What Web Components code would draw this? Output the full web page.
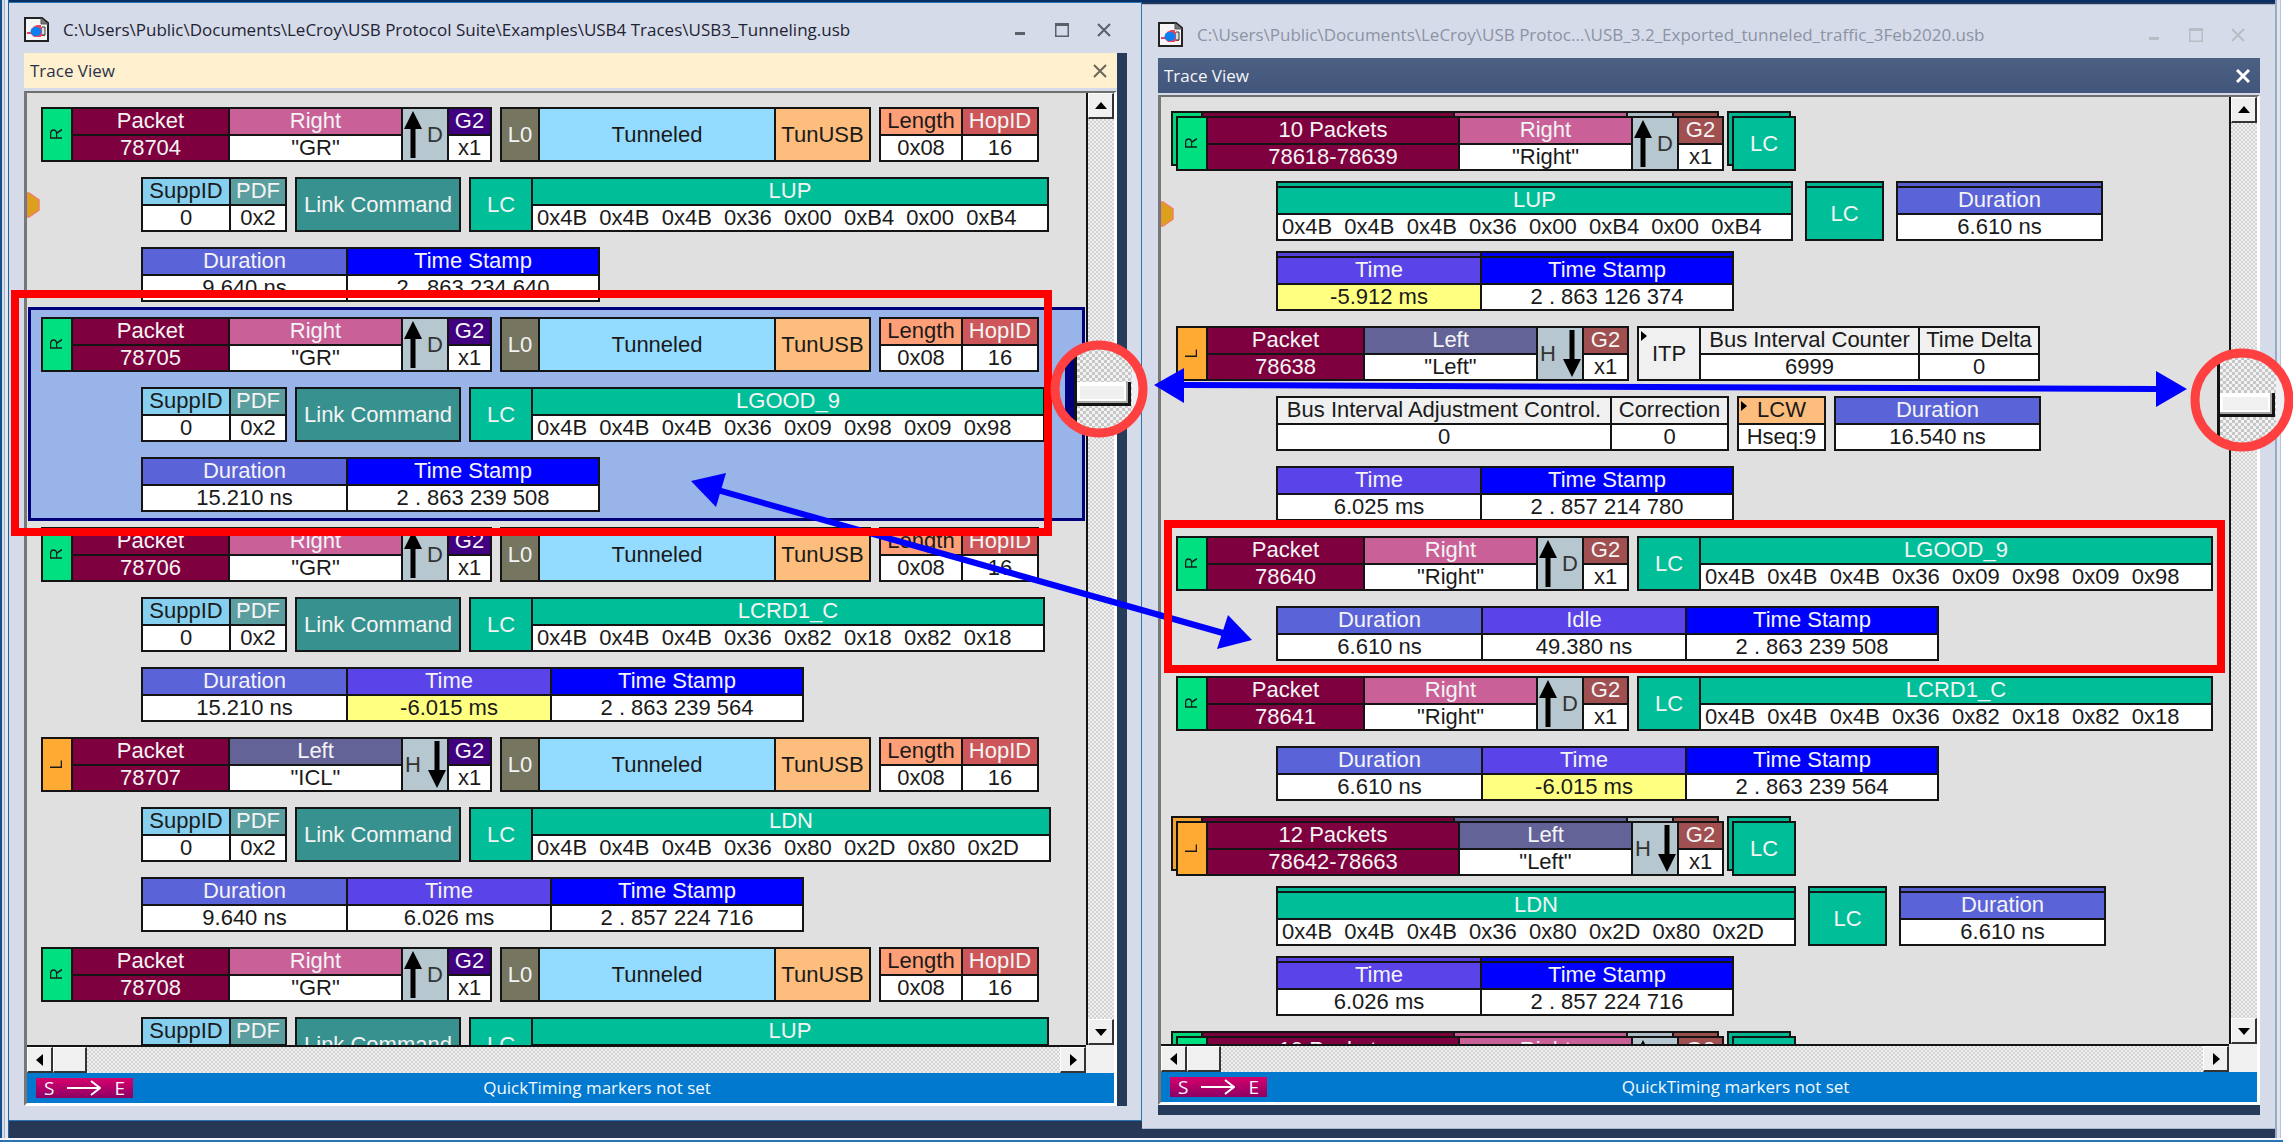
<!DOCTYPE html>
<html lang="en">
<head>
<meta charset="utf-8">
<title>USB Protocol Suite</title>
<style>
  html, body { height: 100%; margin: 0; }
  body { background: #fff; overflow: hidden; }
</style>
</head>
<body>
<app-frame>
  <mdi-window class="active" path="C:\Users\Public\Documents\LeCroy\USB Protocol Suite\Examples\USB4 Traces\USB3_Tunneling.usb">
    <trace-view trace="tunneling"></trace-view>
  </mdi-window>
  <mdi-window class="inactive" path="C:\Users\Public\Documents\LeCroy\USB Protoc...\USB_3.2_Exported_tunneled_traffic_3Feb2020.usb">
    <trace-view trace="exported"></trace-view>
  </mdi-window>
  <callout-layer slot="overlay"></callout-layer>
</app-frame>

<script>
const COLORS = {
  R: '#00e080', L: '#ffaa33', packet: '#7f003e', right: '#c96198', left: '#636398',
  g2: '#40007f', g2b: '#a05050', l0: '#757560', tunneled: '#93dbff', tan: '#fdbd7c',
  length: '#ff9f77', hop: '#cc5659', supp: '#87cfee', pdf: '#5b9e9f', link: '#37918f',
  lc: '#00bf98', dur: '#5a63d8', time: '#5a43e8', stamp: '#0000ff', plain: '#f0f0f0', arrow: '#b7c7cf'
};
const LIGHT = ['plain', 'tan', 'tunneled', 'length', 'supp'];

/* cell: label, value, width, colour key, kind */
const two = (label, value, w, c, extra = '') => ({ label, value, w, c, extra });
const one = (label, w, c, extra = '') => ({ label, w, c, extra });
const side = s => ({ label: s, w: 30, c: s, extra: 'side' });
const dir = s => ({ dir: s, w: 46, c: 'arrow' });
const isRight = s => s === 'R';

const G = {
  head: (s, name, num, nick, pw, g2w, g2c) => [side(s), two(name, num, pw, 'packet', 'full'),
    two(isRight(s) ? 'Right' : 'Left', nick && '"' + nick + '"', 173, isRight(s) ? 'right' : 'left'), dir(s), two('G2', nick && 'x1', g2w, g2c)],
  tunnel: () => [one('L0', 38, 'l0'), one('Tunneled', 236, 'tunneled'), one('TunUSB', 95, 'tan')],
  hop: () => [two('Length', '0x08', 82, 'length'), two('HopID', '16', 76, 'hop')],
  supp: () => [two('SuppID', '0', 88, 'supp'), two('PDF', '0x2', 56, 'pdf')],
  link: () => [one('Link Command', 164, 'link')],
  lc: (n, d, w) => [one('LC', 62, 'lc'), two(n, d, w, 'lc', 'data')],
  dur: v => two('Duration', v, 205, 'dur'),
  time: v => two('Time', v, 204, 'time', v.startsWith('-') ? 'warn' : ''),
  stamp: v => two('Time Stamp', v, 252, 'stamp')
};
const bytes = s => s.split(' ').map(b => '0x' + b).join('  ');
const usb4 = (s, num, nick, name, data, w, times, selected) => ({ selected, rows: [
  [G.head(s, 'Packet', num, nick, 157, 43, 'g2'), G.tunnel(), G.hop()],
  [G.supp(), G.link(), G.lc(name, bytes(data), w)],
  [times]
]});
const LUP = '4B 4B 4B 36 00 B4 00 B4', LG9 = '4B 4B 4B 36 09 98 09 98',
      LCR = '4B 4B 4B 36 82 18 82 18', LDN = '4B 4B 4B 36 80 2D 80 2D';
const stack = (s, count, range, name, data, w, times) => ({ stacked: true, rows: [
  [G.head(s, count + ' Packets', range, range && (isRight(s) ? 'Right' : 'Left'), 252, 45, 'g2b'), [one('LC', 62, 'lc')]],
  [[two(name, bytes(data), w, 'lc', 'data')], [one('LC', 77, 'lc')], [G.dur('6.610 ns')]],
  [times]
]});
const usb3 = (s, num, groups, ...rows) => ({ rows: [
  [G.head(s, 'Packet', num, isRight(s) ? 'Right' : 'Left', 157, 45, 'g2b'), ...groups], ...rows
]});

const TRACES = {
  tunneling: [
    usb4('R', '78704', 'GR', 'LUP', LUP, 516, [G.dur('9.640 ns'), G.stamp('2 . 863 234 640')]),
    usb4('R', '78705', 'GR', 'LGOOD_9', LG9, 512, [G.dur('15.210 ns'), G.stamp('2 . 863 239 508')], true),
    usb4('R', '78706', 'GR', 'LCRD1_C', LCR, 512, [G.dur('15.210 ns'), G.time('-6.015 ms'), G.stamp('2 . 863 239 564')]),
    usb4('L', '78707', 'ICL', 'LDN', LDN, 518, [G.dur('9.640 ns'), G.time('6.026 ms'), G.stamp('2 . 857 224 716')]),
    { rows: usb4('R', '78708', 'GR', 'LUP', LUP, 516, []).rows.slice(0, 2) }
  ],
  exported: [
    stack('R', 10, '78618-78639', 'LUP', LUP, 515, [G.time('-5.912 ms'), G.stamp('2 . 863 126 374')]),
    usb3('L', '78638',
      [[one('ITP', 62, 'plain', 'flag'), two('Bus Interval Counter', '6999', 219, 'plain'), two('Time Delta', '0', 120, 'plain')]],
      [[two('Bus Interval Adjustment Control.', '0', 334, 'plain'), two('Correction', '0', 117, 'plain')],
       [two('LCW', 'Hseq:9', 87, 'tan', 'flag')], [G.dur('16.540 ns')]],
      [[G.time('6.025 ms'), G.stamp('2 . 857 214 780')]]),
    usb3('R', '78640', [G.lc('LGOOD_9', bytes(LG9), 512)],
      [[G.dur('6.610 ns'), two('Idle', '49.380 ns', 204, 'time'), G.stamp('2 . 863 239 508')]]),
    usb3('R', '78641', [G.lc('LCRD1_C', bytes(LCR), 512)],
      [[G.dur('6.610 ns'), G.time('-6.015 ms'), G.stamp('2 . 863 239 564')]]),
    stack('L', 12, '78642-78663', 'LDN', LDN, 518, [G.time('6.026 ms'), G.stamp('2 . 857 224 716')]),
    { stacked: true, rows: stack('R', 10, '', '', '', 0, []).rows.slice(0, 1) }
  ]
};

class BaseElement extends HTMLElement {
  connectedCallback() {
    if (!this.shadowRoot) {
      this.attachShadow({ mode: 'open' }).innerHTML = this.render();
      this.ready();
    }
  }
  ready() {}
}

customElements.define('field-cell', class extends BaseElement {
  render() {
    const d = this.data;
    this.style.width = d.w + 'px';
    this.style.setProperty('--c', COLORS[d.c]);
    this.style.setProperty('--ink', LIGHT.includes(d.c) || 'RL'.includes(d.c) ? '#1a1a1a' : '#f4f4f4');
    const css = `<style>
      :host { display: flex; flex-direction: column; flex: none; box-sizing: border-box; position: relative;
        border-right: 2px solid #141414; background: var(--c); color: var(--ink);
        font: 22px/24px "Liberation Sans", Arial, sans-serif; text-align: center; white-space: pre; }
      .label { border-bottom: 2px solid #141414; height: 25px; }
      .value { background: #fff; color: #1a1a1a; height: 24px; }
      .value.full { background: var(--c); color: #f4f4f4; }
      .value.warn { background: #ffff80; }
      .value.data { text-align: left; padding-left: 4px; }
      .only { margin: auto; }
      .side { font-size: 17px; line-height: 20px; writing-mode: vertical-rl; transform: rotate(180deg); margin: auto; }
      .dir { display: flex; flex: 1; align-items: center; justify-content: space-between; padding: 0 4px 0 1px; color: #333; }
      .dir.down { flex-direction: row-reverse; padding: 0 1px 0 2px; }
      .corner-mark { position: absolute; left: 2px; top: 3px; width: 6px; height: 10px; }
      svg { display: block; }
    </style>`;
    if (this.hasAttribute('blank')) return css;
    if (d.dir) {
      const up = isRight(d.dir);
      return css + `<div class="dir ${up ? '' : 'down'}"><svg width="18" height="51" viewBox="0 0 18 51" aria-hidden="true"><path d="${up
        ? 'M9 2L18 20H11.5V49H6.5V20H0Z' : 'M9 49L18 31H11.5V2H6.5V31H0Z'}" fill="#000"/></svg><span>${up ? 'D' : 'H'}</span></div>`;
    }
    const mark = d.extra === 'flag' ? '<svg class="corner-mark" viewBox="0 0 6 10" aria-hidden="true"><path d="M0 0L6 5L0 10Z"/></svg>' : '';
    if (d.extra === 'side') return css + `<span class="side">${d.label}</span>`;
    if (d.value === undefined) return css + mark + `<span class="only">${d.label}</span>`;
    return css + mark + `<div class="label">${d.label}</div><div class="value ${d.extra}">${d.value}</div>`;
  }
});

customElements.define('field-group', class extends BaseElement {
  render() {
    return `<style>
      :host { display: block; flex: none; position: relative; }
      .cells { display: flex; box-sizing: border-box; height: 55px; border: 2px solid #141414; border-right: 0; position: relative; }
      .back { position: absolute; top: -5px; left: 0; filter: brightness(.95); }
      :host([fan]) .back { left: -5px; }
    </style>${this.hasAttribute('stacked') ? '<div class="cells back" aria-hidden="true"></div>' : ''}<div class="cells front"></div>`;
  }
  ready() {
    for (const box of this.shadowRoot.querySelectorAll('.cells'))
      for (const d of this.cells) {
        const c = document.createElement('field-cell');
        c.data = d;
        if (box.classList.contains('back')) c.setAttribute('blank', '');
        box.append(c);
      }
  }
});

customElements.define('trace-packet', class extends BaseElement {
  render() {
    return `<style>
      :host { display: flex; flex-direction: column; gap: 15px; margin: 0 3px; padding: 8px 0 7px var(--inset, 11px); }
      :host([selected]) { background: #99b4e8; outline: 3px solid #00007d; outline-offset: -1px; }
      :host([stacked]) { padding-top: 13px; }
      .row { display: flex; gap: 8px; }
      .row + .row { padding-left: 100px; }
      :host([stacked]) .row + .row { gap: 12px; }
    </style>${this.data.rows.map(() => '<div class="row"></div>').join('')}`;
  }
  ready() {
    const rows = this.shadowRoot.querySelectorAll('.row');
    this.data.rows.forEach((groups, i) => groups.forEach(cells => {
      const g = document.createElement('field-group');
      g.cells = cells;
      if (this.data.stacked) { g.setAttribute('stacked', ''); if (i === 0) g.setAttribute('fan', ''); }
      rows[i].append(g);
    }));
  }
});

customElements.define('scroll-strip', class extends BaseElement {
  render() {
    const v = this.getAttribute('axis') === 'y';
    const btn = (name, pts) => `<button type="button" aria-label="${name}"><svg width="12" height="14" viewBox="0 0 12 14"><polygon points="${pts}"/></svg></button>`;
    return `<style>
      :host { display: flex; box-sizing: border-box; min-width: 0; min-height: 0;
        background: repeating-conic-gradient(#d2d2d2 0 25%, #f1f1f1 0 50%) 0 0 / 4px 4px; }
      :host([axis=y]) { flex-direction: column; border-left: 2px solid #141414; }
      :host([axis=x]) { border-top: 2px solid #141414; }
      button, .thumb { box-sizing: border-box; flex: none; width: 26px; height: 26px; padding: 0; margin: 0; display: grid; place-items: center;
        background: #f0f0f0; border: 1px solid #fff; border-right: 2px solid #333; border-bottom: 2px solid #333; border-radius: 0; }
      .thumb { width: 34px; }
      .track { flex: 1; }
      svg { display: block; }
    </style>${v
      ? btn('Scroll up', '0,10 6,3 12,10') + '<div class="track"></div>' + btn('Scroll down', '0,4 12,4 6,11')
      : btn('Scroll left', '9,1 9,13 2,7') + '<div class="thumb"></div><div class="track"></div>' + btn('Scroll right', '3,1 3,13 10,7')}`;
  }
});

customElements.define('trace-view', class extends BaseElement {
  render() {
    return `<style>
      :host { display: flex; flex-direction: column; flex: 1; min-height: 0; min-width: 0; font-family: "Open Sans", "Noto Sans", sans-serif; }
      header { display: flex; flex: none; align-items: center; justify-content: space-between; height: 35px; padding: 0 9px 0 6px;
        font-size: 17px; line-height: 24px; background: var(--head); color: var(--head-ink); }
      header button { border: 0; background: none; padding: 0; width: 16px; height: 16px; display: grid; place-items: center; color: var(--head-x); }
      header path { stroke-width: var(--x-w); }
      .client { flex: 1; min-height: 0; display: grid; grid-template: minmax(0, 1fr) 28px 30px / minmax(0, 1fr) 28px;
        margin-top: var(--head-gap); border: 3px solid #fff; border-left-color: #777; border-top: 2px solid #6e6e6e; }
      .list { overflow: hidden; position: relative; background: #e0e0e0; padding-top: var(--list-top); }
      .marker { position: absolute; left: 0; top: var(--marker-top); }
      .corner { background: #f0f0f0; }
      footer { grid-column: 1 / -1; background: #0079cf; color: #f4f9ff; display: flex; align-items: center; padding-left: 9px;
        font-size: 17px; line-height: 24px; }
      .range { display: flex; align-items: center; justify-content: space-between; box-sizing: border-box; width: 97px; height: 20px;
        padding: 0 8px; background: linear-gradient(#d8006c, #8c0064); font-size: 19px; line-height: 20px; }
      .msg { flex: 1; text-align: center; padding-right: 53px; }
    </style>
    <header><span>Trace View</span><button type="button" aria-label="Close view"><svg width="14" height="14" viewBox="0 0 14 14" fill="none" stroke="currentColor"><path d="M1 1L13 13M13 1L1 13"/></svg></button></header>
    <div class="client">
      <div class="list"><svg class="marker" width="13" height="26" viewBox="0 0 13 26" aria-hidden="true"><path d="M0 1H2L12 8V18L2 25H0Z" fill="#dca01c" stroke="#f08060" stroke-width="1.5"/></svg></div>
      <scroll-strip axis="y"></scroll-strip>
      <scroll-strip axis="x"></scroll-strip>
      <div class="corner"></div>
      <footer><span class="range"><span>S</span><svg width="34" height="16" viewBox="0 0 34 16" fill="none" stroke="#fff" stroke-width="2" aria-hidden="true"><path d="M0 8H32M24 1L33 8L24 15"/></svg><span>E</span></span><span class="msg">QuickTiming markers not set</span></footer>
    </div>`;
  }
  ready() {
    const list = this.shadowRoot.querySelector('.list');
    for (const data of TRACES[this.getAttribute('trace')]) {
      const p = document.createElement('trace-packet');
      p.data = data;
      if (data.selected) p.setAttribute('selected', '');
      if (data.stacked) p.setAttribute('stacked', '');
      list.append(p);
    }
  }
});

customElements.define('mdi-window', class extends BaseElement {
  render() {
    return `<style>
      :host { display: flex; flex-direction: column; box-sizing: border-box; min-width: 0; min-height: 0; background: #d6dbe9; border: solid #2b74b4; }
      :host(.active) { border-width: 1px 1px 1px 0; margin: 2px 0 16px; padding: 0 14px 14px 15px; --title-h: 50px; --title-pad: 3px; --title: #1e2433; --ctl: #5a5f68;
        --head: #fff0d0; --head-ink: #2a3348; --head-x: #6a6658; --x-w: 2; --head-gap: 3px; --list-top: 6px; --marker-top: 99px; }
      :host(.inactive) { border-width: 1px 0 1px 0; border-color: #a9b6cc; margin: 4px 0 8px; padding: 0 15px 13px 16px; --title-h: 53px; --title-pad: 6px; --title: #8b93a5; --ctl: #b9bcc2;
        --head: linear-gradient(#4c6084, #42557a); --head-ink: #f4f6fa; --head-x: #fff; --x-w: 3; --head-gap: 2px; --list-top: 6px; --marker-top: 104px; --inset: 12px; }
      .title { display: flex; flex: none; align-items: center; box-sizing: border-box; height: var(--title-h); padding-top: var(--title-pad);
        font: 17px/24px "Open Sans", "Noto Sans", sans-serif; color: var(--title); white-space: nowrap; }
      .title span { margin-left: 14px; flex: 1; min-width: 0; }
      .controls { display: flex; gap: 26px; color: var(--ctl); }
      .controls button { border: 0; background: none; padding: 0; width: 16px; height: 16px; color: inherit; }
      :host(.active) .controls { margin-right: 15px; }
      :host(.inactive) .controls { margin-right: 14px; }
      svg { display: block; }
      .body { display: flex; flex: 1; min-height: 0; }
      :host(.active) .body { border-right: 10px solid #263a5a; }
      :host(.inactive) .body { border-bottom: 10px solid #263a5a; }
    </style>
    <div class="title">
      <svg width="25" height="25" viewBox="0 0 25 25" aria-hidden="true">
        <path d="M1 1H18L24 6V24H1Z" fill="#f6f6f6" stroke="#222" stroke-width="2"/><path d="M17 1V7H24" fill="#777" stroke="#555"/>
        <path d="M3 15H7L9 10L13 8H17V10H21V19H17V20H10L7 17H3Z" fill="#e8435a"/><path d="M18 10H21V18H18" fill="#ddd" stroke="#333"/>
        <ellipse cx="12" cy="14.500" rx="5.500" ry="4.500" fill="#0b7ff2"/>
      </svg>
      <span>${this.getAttribute('path')}</span>
      <div class="controls">
        <button type="button" aria-label="Minimize"><svg width="16" height="16" viewBox="0 0 16 16"><path d="M3 10H13V13H3Z" fill="currentColor"/></svg></button>
        <button type="button" aria-label="Maximize"><svg width="16" height="16" viewBox="0 0 16 16"><path d="M1 1H15V15H1ZM2.500 4V13.500H13.500V4Z" fill="currentColor" fill-rule="evenodd"/></svg></button>
        <button type="button" aria-label="Close"><svg width="16" height="16" viewBox="0 0 16 16"><path d="M2 2L14 14M14 2L2 14" stroke="currentColor" stroke-width="2"/></svg></button>
      </div>
    </div>
    <div class="body"><slot></slot></div>`;
  }
});

customElements.define('app-frame', class extends BaseElement {
  render() {
    return `<style>
      :host { display: block; position: relative; box-sizing: border-box; height: 100vh; padding-right: 10px; background: #fff; }
      .frame { box-sizing: border-box; height: 100%; padding: 0 8px 5px 9px; background:
        linear-gradient(#f4f6fa 0 2px, #2a72b8 2px) bottom / 100% 4px no-repeat,
        linear-gradient(90deg, #0e4f8c 0 2px, #d6dbe9 2px 4px, #a9b2c4 4px 5px, #e4e8f1 5px 8px, #1d64a3 8px 9px) left / 9px 100% no-repeat,
        linear-gradient(90deg, #9aa9c4 0 2px, #dfe4ee 2px 5px, #b9c3d6 5px 6px, #fff 6px) right / 8px 100% no-repeat, #263855; }
      .work { height: 100%; display: grid; grid-template: minmax(0, 1fr) / minmax(0, 1fr) minmax(0, 1fr); background: linear-gradient(#082f63 0 2px, #263855 3px); }
    </style>
    <div class="frame"><div class="work"><slot></slot></div></div><slot name="overlay"></slot>`;
  }
});

customElements.define('callout-layer', class extends BaseElement {
  render() {
    const lens = (id, cx, cy, r, line, edge, navy) => `
      <clipPath id="${id}"><circle cx="${cx}" cy="${cy}" r="${r}"/></clipPath>
      <g clip-path="url(#${id})">
        <rect x="${cx - r}" y="${cy - r}" width="${2 * r}" height="${2 * r}" fill="${navy ? '#99b4e8' : '#e0e0e0'}"/>
        ${navy ? `<rect x="${line - 9}" y="${cy - r}" width="9" height="${2 * r}" fill="#00007d"/>` : ''}
        <rect x="${line}" y="${cy - r}" width="${edge - line}" height="${2 * r}" fill="url(#dots)"/>
        <rect x="${line}" y="${cy - r}" width="3" height="${2 * r}" fill="#141414"/>
        <rect x="${edge}" y="${cy - r}" width="60" height="${2 * r}" fill="#eef0f5"/>
        <rect x="${line + 3}" y="${cy - 7}" width="${edge - line - 4}" height="24" fill="#141414"/>
        <rect x="${line + 3}" y="${cy - 7}" width="${edge - line - 7}" height="21" fill="#a8a8a8"/>
        <rect x="${line + 3}" y="${cy - 7}" width="${edge - line - 9}" height="19" fill="#fff"/>
        <rect x="${line + 6}" y="${cy - 3}" width="${edge - line - 14}" height="13" fill="#f0f0f0"/>
      </g>
      <circle cx="${cx}" cy="${cy}" r="${r}" fill="none" stroke="#ff4040" stroke-width="9"/>`;
    return `<style>
      :host { position: absolute; inset: 0; pointer-events: none; }
      svg { display: block; width: 100%; height: 100%; }
    </style>
    <svg viewBox="0 0 2293 1142" aria-hidden="true">
      <defs><pattern id="dots" width="6" height="6" patternUnits="userSpaceOnUse"><rect width="6" height="6" fill="#f2f2f2"/><path d="M0 0H3V3H0ZM3 3H6V6H3Z" fill="#c6c6c6"/></pattern></defs>
      <g fill="#00f" stroke="none">
        <path d="M1184 382L2157 386V392L1184 388Z"/><path d="M1154 385L1184 368V403Z"/><path d="M2187 389L2156 371V407Z"/>
        <path d="M718 487L1224 630L1222 636L717 493Z"/><path d="M691 481L726 473L716 507Z"/><path d="M1252 640L1228 615L1217 649Z"/>
      </g>
      <g fill="none" stroke="#f00" stroke-width="8"><rect x="15" y="294" width="1033" height="238"/><rect x="1168" y="524" width="1053" height="145"/></g>
      ${lens('lensA', 1099, 389, 44, 1074, 1132, true)}
      ${lens('lensB', 2242, 400, 47, 2217, 2276, false)}
    </svg>`;
  }
});
</script>
</body>
</html>
